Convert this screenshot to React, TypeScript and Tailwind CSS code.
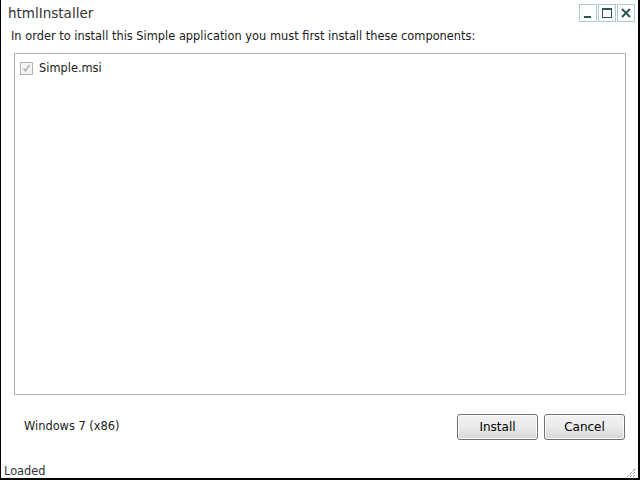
import React from 'react';

function WinButton({ children }: { children: React.ReactNode }) {
  return (
    <div className="w-[18px] h-[18px] border border-[#a9cccc] flex items-center justify-center bg-white">
      {children}
    </div>
  );
}

function PushButton({ label }: { label: string }) {
  return (
    <button className="w-[81px] h-[26px] rounded-[3px] border border-[#707070] bg-gradient-to-b from-[#f2f2f2] via-[#ebebeb] to-[#d6d6d6] text-[12px] text-black shadow-[inset_0_0_0_1px_#fcfcfc]">
      {label}
    </button>
  );
}

export default function App() {
  return (
    <div
      className="w-[640px] h-[480px] bg-white border-l border-r-[2px] border-b-[2px] border-black flex flex-col text-[#1a1a1a]"
      style={{ fontFamily: 'Tahoma, "DejaVu Sans", Verdana, sans-serif' }}
    >
      {/* Title bar */}
      <div className="h-[26px] flex items-center justify-between pl-[7px] pr-[3px]">
        <span className="text-[13.5px] text-[#333] leading-none pt-[1px]">htmlInstaller</span>
        <div className="flex gap-[1px] mt-[-1px]">
          <WinButton>
            <svg width="12" height="12" viewBox="0 0 12 12">
              <rect x="2" y="9" width="7" height="2" fill="#2f5454" />
            </svg>
          </WinButton>
          <WinButton>
            <svg width="12" height="12" viewBox="0 0 12 12">
              <rect x="1.5" y="1.5" width="9" height="9" fill="none" stroke="#2f5454" />
              <rect x="1" y="1" width="10" height="2" fill="#2f5454" />
            </svg>
          </WinButton>
          <WinButton>
            <svg width="12" height="12" viewBox="0 0 12 12">
              <path d="M2 2L10 10M10 2L2 10" stroke="#2f5454" strokeWidth="2" />
            </svg>
          </WinButton>
        </div>
      </div>

      {/* Message */}
      <div className="pl-[10px] pt-[2px] text-[11.4px] leading-[16px] h-[27px]">
        In order to install this Simple application you must first install these components:
      </div>

      {/* Component list */}
      <div className="ml-[13px] mr-[12px] h-[342px] border border-[#adadad] px-[5px] pt-[6px]">
        <label className="flex items-center gap-[6px] text-[11.4px]">
          <span className="w-[13px] h-[13px] border border-[#b1b1b1] bg-[#f4f4f4] flex items-center justify-center">
            <svg width="9" height="9" viewBox="0 0 9 9">
              <path d="M1.5 4.5L3.5 7L7.5 1" fill="none" stroke="#a8a8a8" strokeWidth="1.3" />
            </svg>
          </span>
          Simple.msi
        </label>
      </div>

      {/* Footer */}
      <div className="flex items-center justify-between pl-[23px] pr-[13px] mt-[19px]">
        <span className="text-[11.4px]">Windows 7 (x86)</span>
        <div className="flex gap-[6px]">
          <PushButton label="Install" />
          <PushButton label="Cancel" />
        </div>
      </div>

      {/* Status bar */}
      <div className="mt-auto flex items-end justify-between pl-[3px] pr-[2px]">
        <span className="text-[11.4px] text-[#333] leading-[14px]">Loaded</span>
        <svg width="11" height="11" viewBox="0 0 11 11">
          <path d="M10 2L2 10M10 5L5 10M10 8L8 10" stroke="#3f5a5a" strokeWidth="1" strokeDasharray="1 1" />
        </svg>
      </div>
    </div>
  );
}
